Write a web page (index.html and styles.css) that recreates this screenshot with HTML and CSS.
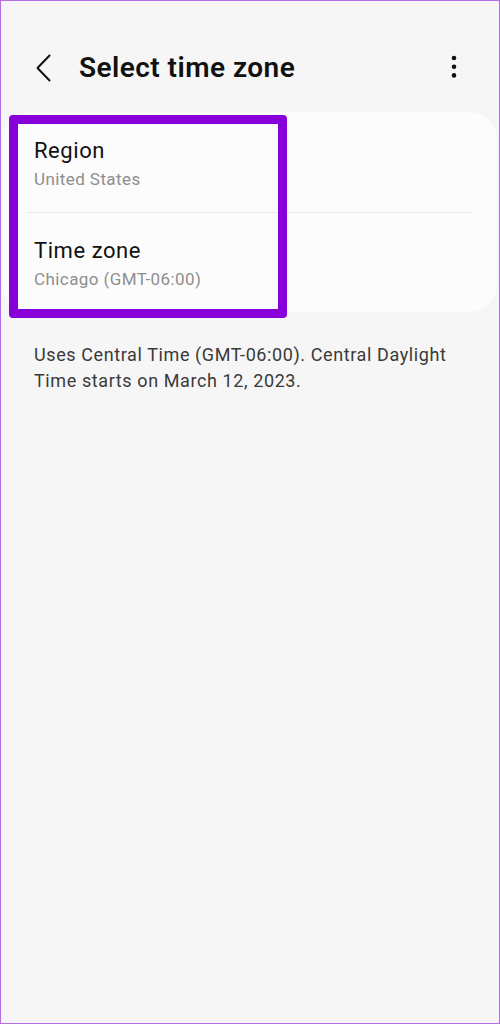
FILE: index.html
```html
<!DOCTYPE html>
<html lang="en">
<head>
<meta charset="utf-8">
<title>Select time zone</title>
<link rel="stylesheet" href="styles.css">
</head>
<body>
<div class="page">
  <header class="topbar">
    <button class="back" aria-label="Back">
      <svg width="16" height="28" viewBox="0 0 16 28" aria-hidden="true">
        <path d="M13.5 1.5 L1.5 14 L13.5 26.5" fill="none" stroke="#111" stroke-width="2" stroke-linecap="round" stroke-linejoin="round"/>
      </svg>
    </button>
    <h1 class="title">Select time zone</h1>
    <button class="more" aria-label="More options">
      <svg width="6" height="24" viewBox="0 0 6 24" aria-hidden="true">
        <circle cx="3" cy="3" r="2.3" fill="#111"/>
        <circle cx="3" cy="11.7" r="2.3" fill="#111"/>
        <circle cx="3" cy="20.4" r="2.3" fill="#111"/>
      </svg>
    </button>
  </header>

  <section class="card-wrap">
    <div class="card">
      <div class="row">
        <div class="row-title">Region</div>
        <div class="row-sub">United States</div>
      </div>
      <div class="divider"></div>
      <div class="row">
        <div class="row-title">Time zone</div>
        <div class="row-sub">Chicago (GMT-06:00)</div>
      </div>
    </div>
    <div class="highlight"></div>
  </section>

  <p class="note">Uses Central Time (GMT-06:00). Central Daylight Time starts on March 12, 2023.</p>
</div>
</body>
</html>
```

FILE: styles.css
```css
html, body {
  margin: 0;
  padding: 0;
}

body {
  font-family: Roboto, "Noto Sans", "Liberation Sans", sans-serif;
  background: #f6f6f6;
}

.page {
  width: 500px;
  height: 1024px;
  box-sizing: border-box;
  border: 1px solid #b36ee3;
  background: #f6f6f6;
  overflow: hidden;
}

.topbar {
  display: flex;
  align-items: center;
  height: 34px;
  padding-top: 50px;
}

.back {
  border: 0;
  background: none;
  padding: 0;
  margin-left: 35px;
  width: 16px;
  height: 28px;
  display: flex;
}

.title {
  margin: 0 0 0 27px;
  font-size: 28px;
  line-height: 34px;
  font-weight: 600;
  color: #111;
  letter-spacing: 0.45px;
  flex: 1;
}

.more {
  border: 0;
  background: none;
  padding: 0;
  margin-right: 42px;
  width: 6px;
  height: 24px;
  display: flex;
  margin-top: -2px;
}

.card-wrap {
  position: relative;
  margin: 27px 2px 0 2px;
}

.card {
  background: #fcfcfc;
  border-radius: 28px;
  height: 200px;
  display: flex;
  flex-direction: column;
}

.row {
  height: 100px;
  box-sizing: border-box;
  padding: 26px 0 0 31px;
}

.divider {
  height: 1px;
  background: #e9e9e9;
  margin: 0 25px;
  margin-top: -0.5px;
  margin-bottom: -0.5px;
}

.row-title {
  font-size: 22px;
  line-height: 26px;
  color: #111;
  letter-spacing: 0.55px;
}

.row-sub {
  font-size: 17px;
  line-height: 24px;
  color: #8e8e8e;
  margin-top: 3px;
  letter-spacing: 0.42px;
}

.highlight {
  position: absolute;
  left: 6px;
  top: 3px;
  width: 278px;
  height: 203px;
  box-sizing: border-box;
  border: 9px solid #8700d9;
  border-radius: 4px;
}

.note {
  margin: 30px 30px 0 33px;
  font-size: 18px;
  line-height: 26px;
  color: #3a3a3a;
  letter-spacing: 0.6px;
}
```
